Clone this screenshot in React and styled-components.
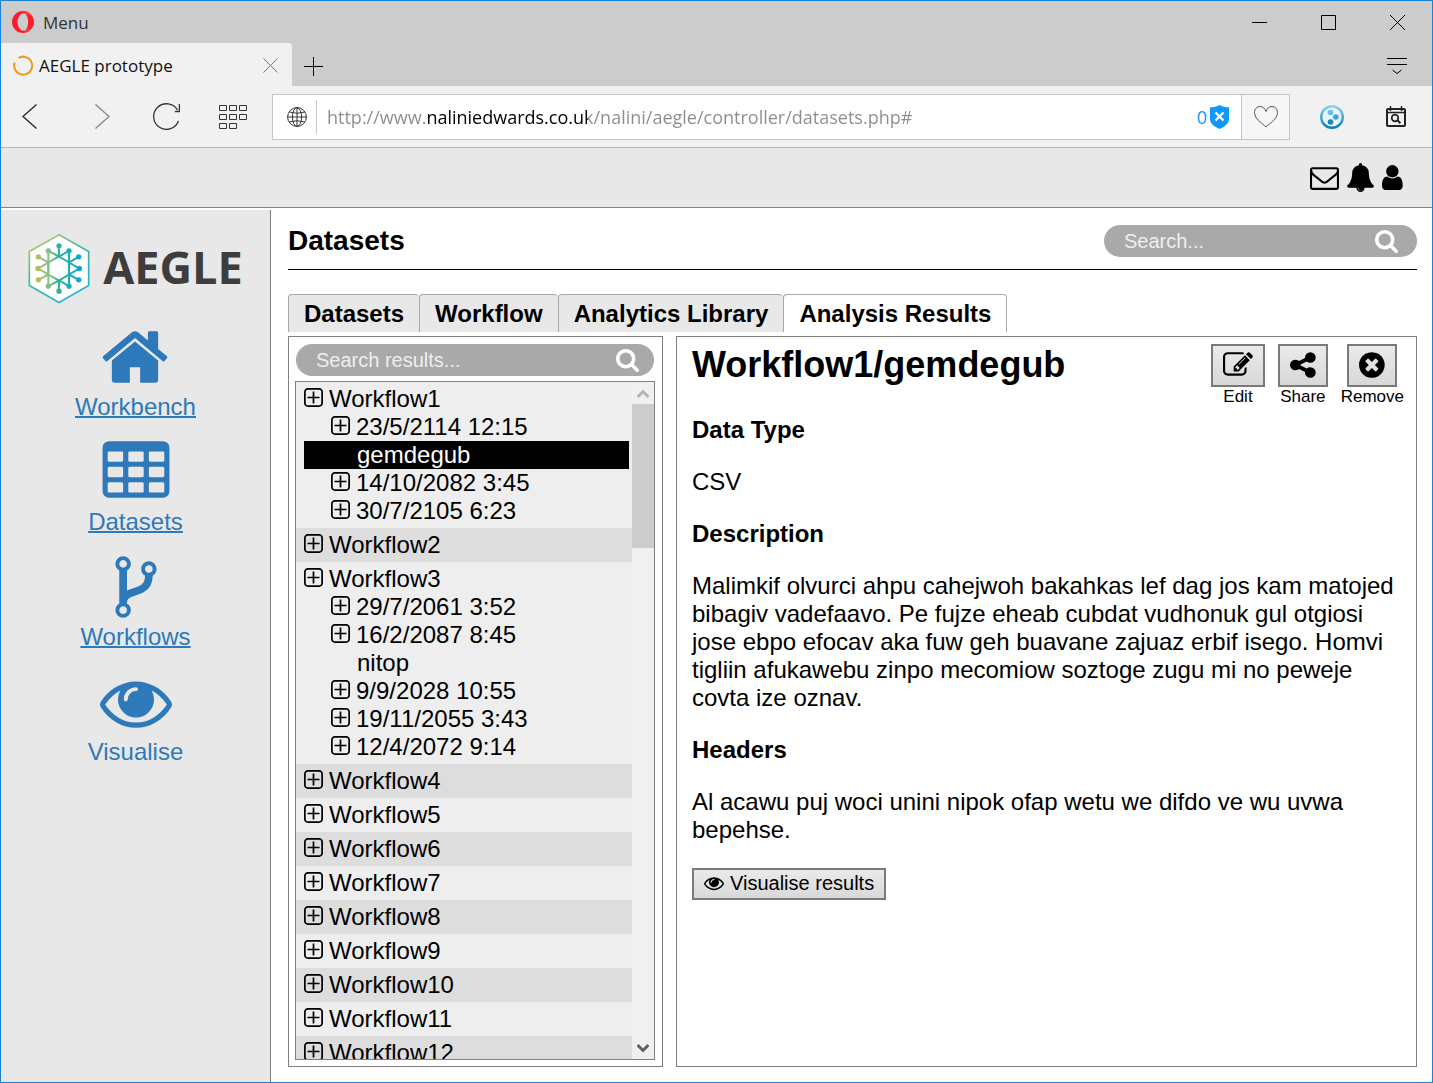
import React, { useState } from 'react';
import styled, { createGlobalStyle } from 'styled-components';

const GlobalStyle = createGlobalStyle`
  * {
    box-sizing: border-box;
  }
  body {
    margin: 0;
    font-family: 'Liberation Sans', Arial, sans-serif;
    font-size: 24px;
    line-height: 28px;
    color: #000;
    background: #fff;
  }
  button, input {
    font-family: inherit;
    color: inherit;
  }
  svg {
    display: block;
    flex: none;
  }
`;

/* ---------- icons ---------- */

// [viewBox, path], 1792 units = 1em
const icons = {
  home: [
    '0 0 1792 1792',
    'M1472 992v480q0 26-19 45t-45 19h-384v-384h-256v384h-384q-26 0-45-19t-19-45v-480q0-1 .5-3t.5-3l575-474 575 474q1 2 1 6zm223-69l-62 74q-8 9-21 11h-3q-13 0-21-7l-692-577-692 577q-12 8-24 7-13-2-21-11l-62-74q-8-10-7-23.5t11-21.5l719-599q32-26 76-26t76 26l244 204v-195q0-14 9-23t23-9h192q14 0 23 9t9 23v408l219 182q10 8 11 21.5t-7 23.5z',
  ],
  table: [
    '0 0 1792 1792',
    'M576 1376v-192q0-14-9-23t-23-9h-320q-14 0-23 9t-9 23v192q0 14 9 23t23 9h320q14 0 23-9t9-23zm0-384v-192q0-14-9-23t-23-9h-320q-14 0-23 9t-9 23v192q0 14 9 23t23 9h320q14 0 23-9t9-23zm512 384v-192q0-14-9-23t-23-9h-320q-14 0-23 9t-9 23v192q0 14 9 23t23 9h320q14 0 23-9t9-23zm-512-768v-192q0-14-9-23t-23-9h-320q-14 0-23 9t-9 23v192q0 14 9 23t23 9h320q14 0 23-9t9-23zm512 384v-192q0-14-9-23t-23-9h-320q-14 0-23 9t-9 23v192q0 14 9 23t23 9h320q14 0 23-9t9-23zm512 384v-192q0-14-9-23t-23-9h-320q-14 0-23 9t-9 23v192q0 14 9 23t23 9h320q14 0 23-9t9-23zm-512-768v-192q0-14-9-23t-23-9h-320q-14 0-23 9t-9 23v192q0 14 9 23t23 9h320q14 0 23-9t9-23zm512 384v-192q0-14-9-23t-23-9h-320q-14 0-23 9t-9 23v192q0 14 9 23t23 9h320q14 0 23-9t9-23zm0-384v-192q0-14-9-23t-23-9h-320q-14 0-23 9t-9 23v192q0 14 9 23t23 9h320q14 0 23-9t9-23zm128-320v1088q0 66-47 113t-113 47h-1344q-66 0-113-47t-47-113v-1088q0-66 47-113t113-47h1344q66 0 113 47t47 113z',
  ],
  fork: [
    '0 0 1792 1792',
    'M672 1472q0-40-28-68t-68-28-68 28-28 68 28 68 68 28 68-28 28-68zm0-1152q0-40-28-68t-68-28-68 28-28 68 28 68 68 28 68-28 28-68zm640 128q0-40-28-68t-68-28-68 28-28 68 28 68 68 28 68-28 28-68zm96 0q0 52-26 96.5t-70 69.5q-2 287-226 414-67 38-203 81-128 40-169.5 71t-41.5 100v26q44 25 70 69.5t26 96.5q0 80-56 136t-136 56-136-56-56-136q0-52 26-96.5t70-69.5v-820q-44-25-70-69.5t-26-96.5q0-80 56-136t136-56 136 56 56 136q0 52-26 96.5t-70 69.5v497q54-26 154-57 55-17 87.5-29.5t70.5-31 59-39.5 40.5-51 28-69.5 8.5-91.5q-44-25-70-69.5t-26-96.5q0-80 56-136t136-56 136 56 56 136z',
  ],
  eye: [
    '0 0 1792 1792',
    'M1664 960q-152-236-381-353 61 104 61 225 0 185-131.5 316.5t-316.5 131.5-316.5-131.5-131.5-316.5q0-121 61-225-229 117-381 353 133 205 333.5 326.5t434.5 121.5 434.5-121.5 333.5-326.5zm-720-384q0-20-14-34t-34-14q-125 0-214.5 89.5t-89.5 214.5q0 20 14 34t34 14 34-14 14-34q0-86 61-147t147-61q20 0 34-14t14-34zm848 384q0 34-20 69-140 230-376.5 368.5t-499.5 138.5-499.5-139-376.5-368q-20-35-20-69t20-69q140-229 376.5-368t499.5-139 499.5 139 376.5 368q20 35 20 69z',
  ],
  envelope: [
    '0 0 1792 1792',
    'M1664 1504v-768q-32 36-69 66-268 206-426 338-51 43-83 67t-86.5 48.5-102.5 24.5h-2q-48 0-102.5-24.5t-86.5-48.5-83-67q-158-132-426-338-37-30-69-66v768q0 13 9.5 22.5t22.5 9.5h1472q13 0 22.5-9.5t9.5-22.5zm0-1051v-24.5l-.5-13-3-12.5-5.5-9-9-7.5-14-2.5h-1472q-13 0-22.5 9.5t-9.5 22.5q0 168 147 284 193 152 401 317 6 5 35 29.5t46 37.5 44.5 31.5 50.5 27.5 43 9h2q20 0 43-9t50.5-27.5 44.5-31.5 46-37.5 35-29.5q208-165 401-317 54-43 100.5-115.5t46.5-131.5zm128-37v1088q0 66-47 113t-113 47h-1472q-66 0-113-47t-47-113v-1088q0-66 47-113t113-47h1472q66 0 113 47t47 113z',
  ],
  bell: [
    '0 0 1792 1792',
    'M912 1696q0-16-16-16-59 0-101.5-42.5t-42.5-101.5q0-16-16-16t-16 16q0 73 51.5 124.5t124.5 51.5q16 0 16-16zm816-288q0 52-38 90t-90 38h-448q0 106-75 181t-181 75-181-75-75-181h-448q-52 0-90-38t-38-90q50-42 91-88t85-119.5 74.5-158.5 50-206 19.5-260q0-152 117-282.5t307-158.5q-8-19-8-39 0-40 28-68t68-28 68 28 28 68q0 20-8 39 190 28 307 158.5t117 282.5q0 139 19.5 260t50 206 74.5 158.5 85 119.5 91 88z',
  ],
  user: [
    '256 0 1280 1792',
    'M1536 1399q0 109-62.5 187t-150.5 78h-854q-88 0-150.5-78t-62.5-187q0-85 8.5-160.5t31.5-152 58.5-131 94-89 134.5-34.5q131 128 313 128t313-128q76 0 134.5 34.5t94 89 58.5 131 31.5 152 8.5 160.5zm-256-887q0 159-112.5 271.5t-271.5 112.5-271.5-112.5-112.5-271.5 112.5-271.5 271.5-112.5 271.5 112.5 112.5 271.5z',
  ],
  search: [
    '64 128 1664 1664',
    'M1216 832q0-185-131.5-316.5t-316.5-131.5-316.5 131.5-131.5 316.5 131.5 316.5 316.5 131.5 316.5-131.5 131.5-316.5zm512 832q0 52-38 90t-90 38q-54 0-90-38l-343-342q-179 124-399 124-143 0-273.5-55.5t-225-150-150-225-55.5-273.5 55.5-273.5 150-225 225-150 273.5-55.5 273.5 55.5 225 150 150 225 55.5 273.5q0 220-124 399l343 343q37 37 37 90z',
  ],
  edit: [
    '0 0 1792 1792',
    'M888 1184l116-116-152-152-116 116v56h96v96h56zm440-720q-16-16-33 1l-350 350q-17 17-1 33t33-1l350-350q17-17 1-33zm80 594v190q0 119-84.5 203.5t-203.5 84.5h-832q-119 0-203.5-84.5t-84.5-203.5v-832q0-119 84.5-203.5t203.5-84.5h832q63 0 117 25 15 7 18 23 3 17-9 29l-49 49q-14 14-32 8-23-6-45-6h-832q-66 0-113 47t-47 113v832q0 66 47 113t113 47h832q66 0 113-47t47-113v-126q0-13 9-22l64-64q15-15 35-7t20 29zm-96-738l288 288-672 672h-288v-288zm444 132l-92 92-288-288 92-92q28-28 68-28t68 28l152 152q28 28 28 68t-28 68z',
  ],
  share: [
    '128 0 1536 1792',
    'M1344 1024q133 0 226.5 93.5t93.5 226.5-93.5 226.5-226.5 93.5-226.5-93.5-93.5-226.5q0-12 2-34l-360-180q-92 86-218 86-133 0-226.5-93.5t-93.5-226.5 93.5-226.5 226.5-93.5q126 0 218 86l360-180q-2-22-2-34 0-133 93.5-226.5t226.5-93.5 226.5 93.5 93.5 226.5-93.5 226.5-226.5 93.5q-126 0-218-86l-360 180q2 22 2 34t-2 34l360 180q92-86 218-86z',
  ],
  remove: [
    '128 0 1536 1792',
    'M1277 1122q0-26-19-45l-181-181 181-181q19-19 19-45 0-27-19-46l-90-90q-19-19-46-19-26 0-45 19l-181 181-181-181q-19-19-45-19-27 0-46 19l-90 90q-19 19-19 46 0 26 19 45l181 181-181 181q-19 19-19 45 0 27 19 46l90 90q19 19 46 19 26 0 45-19l181-181 181 181q19 19 45 19 27 0 46-19l90-90q19-19 19-46zm387-226q0 209-103 385.5t-279.5 279.5-385.5 103-385.5-103-279.5-279.5-103-385.5 103-385.5 279.5-279.5 385.5-103 385.5 103 279.5 279.5 103 385.5z',
  ],
  plus: [
    '192 192 1408 1408',
    'M1344 864v64q0 14-9 23t-23 9h-352v352q0 14-9 23t-23 9h-64q-14 0-23-9t-9-23v-352h-352q-14 0-23-9t-9-23v-64q0-14 9-23t23-9h352v-352q0-14 9-23t23-9h64q14 0 23 9t9 23v352h352q14 0 23 9t9 23zm128 448v-832q0-66-47-113t-113-47h-832q-66 0-113 47t-47 113v832q0 66 47 113t113 47h832q66 0 113-47t47-113zm128-832v832q0 119-84.5 203.5t-203.5 84.5h-832q-119 0-203.5-84.5t-84.5-203.5v-832q0-119 84.5-203.5t203.5-84.5h832q119 0 203.5 84.5t84.5 203.5z',
  ],
};

const Icon = ({ name, size }) => (
  <svg height={size} viewBox={icons[name][0]} fill='currentColor' aria-hidden='true'>
    <path d={icons[name][1]} />
  </svg>
);

const Line = ({ w, h, d, color = '#000', width = 1 }) => (
  <svg
    width={w}
    height={h}
    viewBox={`0 0 ${w} ${h}`}
    fill='none'
    stroke={color}
    strokeWidth={width}
    aria-hidden='true'
  >
    <path d={d} />
  </svg>
);

const OperaIcon = () => (
  <svg width='22' height='22' viewBox='0 0 22 22' aria-hidden='true'>
    <path
      fill='#ff1b2d'
      fillRule='evenodd'
      d='M11 0a11 11 0 1 0 0 22a11 11 0 1 0 0-22zM11.5 2.2c2.8 0 4.6 3.800 4.600 8.800s-1.800 8.800-4.600 8.800s-6-3.800-6-8.800s3.200-8.800 6-8.800z'
    />
    <path d='M11.5 2.500c4-.5 6 0 7 2M11.500 19.500c4 .5 6 0 7-2' fill='none' stroke='#e58a90' strokeWidth='.6' />
  </svg>
);

const GlobeIcon = () => (
  <svg width='20' height='20' viewBox='0 0 20 20' fill='none' stroke='#333' aria-hidden='true'>
    <circle cx='10' cy='10' r='9.400' />
    <ellipse cx='10' cy='10' rx='4.600' ry='9.400' />
    <path d='M10 .5v19M.5 10h19M2.200 5q7.800 2.600 15.600 0M2.200 15q7.800-2.600 15.600 0' />
  </svg>
);

const ShieldIcon = () => (
  <svg width='19' height='24' viewBox='0 0 19 24' aria-hidden='true'>
    <path fill='#0d98ff' d='M9.500 0c2.500 1.600 5.500 2.300 9.500 2.300v11.700c0 4.500-4 7.500-9.500 10c-5.500-2.500-9.500-5.500-9.500-10v-11.700c4 0 7-.7 9.500-2.300z' />
    <path stroke='#fff' strokeWidth='2.200' d='M5.500 7.500l8 8m0-8l-8 8' />
  </svg>
);

const BallIcon = () => (
  <svg width='24' height='24' viewBox='0 0 24 24' aria-hidden='true'>
    <defs>
      <linearGradient id='ball' x1='0' y1='0' x2='0' y2='1'>
        <stop offset='0' stopColor='#8fd0ee' />
        <stop offset='1' stopColor='#0a7db8' />
      </linearGradient>
    </defs>
    <circle cx='12' cy='12' r='10.800' fill='#e6f5fb' stroke='url(#ball)' strokeWidth='2.400' />
    <circle cx='10.500' cy='7.500' r='2.800' fill='#6cbde2' />
    <circle cx='15.800' cy='12' r='2.800' fill='#3fa3d3' />
    <circle cx='10.500' cy='17' r='2.800' fill='#1487c1' />
  </svg>
);

const HistoryIcon = () => (
  <svg width='20' height='21' viewBox='0 0 20 21' fill='none' stroke='#222' strokeWidth='2' aria-hidden='true'>
    <rect x='1' y='3' width='18' height='17' rx='1' />
    <path strokeWidth='1.500' d='M1 6.500h18M4.500 0v5M15.500 0v5' />
    <circle cx='9' cy='12' r='3.300' strokeWidth='1.700' />
    <path d='M11.400 14.200l3 3' />
  </svg>
);

const LogoMark = () => (
  <svg width='62' height='71' viewBox='86 98 186 212' aria-hidden='true'>
    <defs>
      <linearGradient id='edge' gradientUnits='userSpaceOnUse' x1='120' y1='100' x2='240' y2='300'>
        <stop offset='0' stopColor='#b5c95e' />
        <stop offset='.5' stopColor='#35b9a8' />
        <stop offset='1' stopColor='#22b4dc' />
      </linearGradient>
      <linearGradient id='nodes' gradientUnits='userSpaceOnUse' x1='112' y1='0' x2='244' y2='0'>
        <stop offset='0' stopColor='#b3bf5f' />
        <stop offset='.3' stopColor='#7fc08b' />
        <stop offset='.5' stopColor='#27b398' />
        <stop offset='.75' stopColor='#17b0b5' />
        <stop offset='1' stopColor='#12a0dc' />
      </linearGradient>
    </defs>
    <path d='M179 103l89 50v102l-89 51l-89-51v-102z' fill='#fff' stroke='url(#edge)' strokeWidth='5' />
    <g stroke='url(#nodes)' strokeWidth='6' fill='none'>
      <path d='M178 136L179.500 168M178 272L179.500 240M209 151v106M147 151v106' />
      <path d='M147 151l32 17l30-17M147 257l32-17l30 17' />
      <path d='M179 168l30 18v36l-30 18l-32-18v-36z' />
      <path d='M117 169l30 17l-31 18l31 18l-30 16M238 169l-29 17l31 18l-31 18l29 16' />
    </g>
    <g fill='url(#nodes)'>
      {[
        [179, 136], [209, 151], [238, 169], [240, 204], [238, 238], [209, 257],
        [179, 272], [147, 257], [117, 238], [116, 204], [117, 169], [147, 151],
      ].map(([cx, cy]) => (
        <circle key={`${cx}-${cy}`} cx={cx} cy={cy} r='8' />
      ))}
    </g>
  </svg>
);

/* ---------- browser window ---------- */

const Window = styled.div`
  display: flex;
  flex-direction: column;
  height: 100vh;
  min-height: 600px;
  border: 1px solid #1883d7;
`;

const Chrome = styled.header`
  flex: none;
  font-family: 'Open Sans', 'Segoe UI', sans-serif;
  font-size: 17px;
  line-height: 24px;
  background: #ccc;
`;

const ChromeButton = styled.button`
  display: flex;
  align-items: center;
  justify-content: center;
  padding: 0;
  border: none;
  background: none;
  cursor: pointer;
`;

const TitleBar = styled.div`
  display: flex;
  align-items: center;
  justify-content: space-between;
  height: 42px;
  padding: 0 27px 0 11px;
`;

const MenuButton = styled(ChromeButton)`
  gap: 9px;
  font-size: 17px;
  color: #333;
`;

const WindowButtons = styled.div`
  display: flex;
  gap: 54px;
`;

const TabStrip = styled.div`
  display: flex;
  align-items: center;
  height: 43px;
  padding-right: 25px;
`;

const BrowserTab = styled.div`
  display: flex;
  align-items: center;
  gap: 5px;
  width: 291px;
  height: 100%;
  margin-right: 12px;
  padding: 2px 14px 0 12px;
  border-radius: 0 3px 0 0;
  background: #f1f1f1;
  color: #111;
`;

const TabTitle = styled.span`
  flex: 1;
`;

const NewTab = styled(ChromeButton)`
  padding-top: 4px;
`;

const TabMenu = styled(ChromeButton)`
  margin-left: auto;
  padding-top: 4px;
`;

const Toolbar = styled.div`
  display: flex;
  align-items: center;
  height: 62px;
  padding: 0 26px 0 21px;
  border-bottom: 1px solid #b8b8b8;
  background: #f1f1f1;
`;

const NavButtons = styled.div`
  display: flex;
  align-items: center;
  margin-right: 25px;
`;

const NavButton = styled(ChromeButton)`
  margin-right: ${(props) => props.$gap || 0}px;
`;

const AddressBar = styled.div`
  display: flex;
  flex: 1;
  align-items: center;
  height: 46px;
  padding-left: 14px;
  border: 1px solid #c6c6c6;
  background: #fff;
`;

const AddressInput = styled.input`
  flex: 1;
  min-width: 0;
  height: 34px;
  margin-left: 9px;
  padding: 0 0 0 10px;
  border: none;
  border-left: 1px solid #c6c6c6;
  outline: none;
  font-size: 18px;
  /* the host name is darker than the rest of the address */
  background: linear-gradient(90deg, #8c8c8c 108px, #000 108px, #000 271px, #8c8c8c 271px);
  -webkit-background-clip: text;
  background-clip: text;
  -webkit-text-fill-color: transparent;
`;

const BlockedCount = styled.span`
  margin-right: 3px;
  font-size: 18px;
  color: #0d98ff;
`;

const HeartButton = styled(ChromeButton)`
  width: 48px;
  height: 44px;
  margin-left: 12px;
  border-left: 1px solid #c6c6c6;
  background: #f5f6f8;
`;

const Extensions = styled.div`
  display: flex;
  align-items: center;
  gap: 42px;
  margin-left: 30px;
`;

/* ---------- page ---------- */

const TopBar = styled.div`
  display: flex;
  flex: none;
  align-items: center;
  justify-content: flex-end;
  gap: 7px;
  height: 60px;
  padding-right: 29px;
  border-bottom: 1px solid #808080;
  background: #e8e8e8;
`;

const IconButton = styled.button`
  display: block;
  padding: 0;
  border: none;
  background: none;
  cursor: pointer;
`;

const Page = styled.div`
  display: flex;
  flex: 1;
  min-height: 0;
`;

const Sidebar = styled.aside`
  flex: none;
  width: 270px;
  margin-top: 2px;
  padding-top: 23px;
  border-right: 1px solid #808080;
  background: #e8e8e8;
`;

const Logo = styled.div`
  display: flex;
  align-items: center;
  justify-content: center;
  gap: 13px;
  margin-bottom: 17px;
`;

const LogoText = styled.span`
  padding-bottom: 3px;
  font-family: 'Open Sans', sans-serif;
  font-size: 45px;
  font-weight: 700;
  color: #3d3d3d;
`;

const SideNav = styled.nav`
  display: flex;
  flex-direction: column;
  align-items: center;
  gap: 15px;
`;

const SideLink = styled.a`
  display: flex;
  flex-direction: column;
  align-items: center;
  color: #2e79b9;
  text-decoration: ${(props) => (props.$plain ? 'none' : 'underline')};
  text-decoration-thickness: 2px;
`;

const Main = styled.main`
  display: flex;
  flex: 1;
  flex-direction: column;
  min-width: 0;
  padding: 17px 15px 15px 17px;
`;

const PageHead = styled.div`
  display: flex;
  align-items: center;
  justify-content: space-between;
  padding-bottom: 12px;
  border-bottom: 1px solid #000;
`;

const PageTitle = styled.h1`
  margin: 0;
  font-size: 28px;
  line-height: 32px;
`;

const SearchPill = styled.label`
  display: flex;
  align-items: center;
  height: 32px;
  padding: 0 15px 0 20px;
  border-radius: 16px;
  background: #a9a9a9;
  color: #fff;
`;

const PageSearch = styled(SearchPill)`
  width: 313px;
  padding-right: 19px;
`;

const ResultSearch = styled(SearchPill)`
  margin: 0 1px 5px;
`;

const SearchInput = styled.input`
  flex: 1;
  min-width: 0;
  padding: 0;
  border: none;
  outline: none;
  background: none;
  font-size: 20px;
  &::placeholder {
    color: #eee;
    opacity: 1;
  }
`;

const Tabs = styled.div`
  display: flex;
  margin: 24px 0 4px;
`;

const Tab = styled.button`
  height: 38px;
  padding: 0 15px;
  border: 1px solid #a9a9a9;
  border-width: 1px 0 0 1px;
  border-radius: 4px 4px 0 0;
  background: #e8e8e8;
  font-size: 24px;
  font-weight: bold;
  cursor: pointer;
  ${(props) =>
    props.$active &&
    `
    border-right-width: 1px;
    background: #fff;
  `}
`;

const Panels = styled.div`
  display: grid;
  flex: 1;
  grid-template-columns: 375px 1fr;
  grid-template-rows: minmax(0, 1fr);
  gap: 13px;
  min-height: 0;
`;

const Panel = styled.section`
  border: 1px solid #808080;
`;

const ResultsPanel = styled(Panel)`
  display: flex;
  flex-direction: column;
  padding: 7px 7px 6px 6px;
`;

const TreeBox = styled.div`
  display: flex;
  flex: 1;
  min-height: 0;
  border: 1px solid #808080;
  background: #eee;
`;

const Tree = styled.ul`
  flex: 1;
  margin: 0;
  padding: 0;
  overflow-y: auto;
  scrollbar-width: none;
  list-style: none;
`;

const TreeGroup = styled.li`
  padding: 3px 3px 3px 8px;
  &:nth-child(even) {
    background: #ddd;
  }
`;

const Branch = styled.ul`
  margin: 0;
  padding: 0;
  list-style: none;
`;

const TreeRow = styled.button`
  display: flex;
  align-items: center;
  gap: 6px;
  width: 100%;
  height: 28px;
  padding: 0 0 0 ${(props) => props.$indent || 0}px;
  border: none;
  background: ${(props) => (props.$selected ? '#000' : 'none')};
  color: ${(props) => (props.$selected ? '#fff' : '#000')};
  font-size: 24px;
  text-align: left;
  cursor: pointer;
  svg {
    margin-bottom: 3px;
  }
`;

const ScrollBar = styled.div`
  display: flex;
  flex-direction: column;
  align-items: center;
  width: 22px;
  background: #f0f0f0;
`;

const ScrollArrow = styled.div`
  display: flex;
  align-items: center;
  height: 22px;
`;

const ScrollThumb = styled.div`
  width: 100%;
  height: 144px;
  margin-bottom: auto;
  background: #cdcdcd;
`;

const DetailPanel = styled(Panel)`
  padding: 7px 12px 7px 15px;
  overflow: auto;
  p {
    margin: 0 0 24px;
  }
`;

const DetailHead = styled.div`
  display: flex;
  align-items: flex-start;
  justify-content: space-between;
  margin-bottom: 10px;
`;

const DetailTitle = styled.h2`
  margin: 0;
  font-size: 36px;
  line-height: 41px;
`;

const Actions = styled.div`
  display: flex;
  gap: 13px;
`;

const Action = styled.label`
  display: flex;
  flex-direction: column;
  align-items: center;
  font-size: 17px;
  line-height: 19px;
`;

const GreyButton = styled.button`
  display: flex;
  align-items: center;
  padding: 0 10px 2px;
  border: 2px solid #7a7a7a;
  background: linear-gradient(#eaeaea, #d8d8d8);
  cursor: pointer;
`;

const ActionButton = styled(GreyButton)`
  height: 43px;
`;

const FieldName = styled.h3`
  margin: 0 0 24px;
  font-size: 24px;
  line-height: 28px;
`;

const VisualiseButton = styled(GreyButton)`
  gap: 6px;
  height: 32px;
  font-size: 20px;
`;

const navItems = [
  { icon: 'home', label: 'Workbench' },
  { icon: 'table', label: 'Datasets' },
  { icon: 'fork', label: 'Workflows' },
  { icon: 'eye', label: 'Visualise', plain: true },
];

const tabs = ['Datasets', 'Workflow', 'Analytics Library', 'Analysis Results'];

const workflows = [
  {
    name: 'Workflow1',
    children: ['23/5/2114 12:15', 'gemdegub', '14/10/2082 3:45', '30/7/2105 6:23'],
  },
  { name: 'Workflow2' },
  {
    name: 'Workflow3',
    children: [
      '29/7/2061 3:52',
      '16/2/2087 8:45',
      'nitop',
      '9/9/2028 10:55',
      '19/11/2055 3:43',
      '12/4/2072 9:14',
    ],
  },
  { name: 'Workflow4' },
  { name: 'Workflow5' },
  { name: 'Workflow6' },
  { name: 'Workflow7' },
  { name: 'Workflow8' },
  { name: 'Workflow9' },
  { name: 'Workflow10' },
  { name: 'Workflow11' },
  { name: 'Workflow12' },
];

// runs have a date as their name, results have a word
const isRun = (name) => name.includes('/');

function BrowserChrome() {
  const [url, setUrl] = useState('http://www.naliniedwards.co.uk/nalini/aegle/controller/datasets.php#');

  return (
    <Chrome>
      <TitleBar>
        <MenuButton>
          <OperaIcon />
          Menu
        </MenuButton>
        <WindowButtons>
          <ChromeButton aria-label='Minimise'>
            <Line w={15} h={15} d='M0 7.500h15' />
          </ChromeButton>
          <ChromeButton aria-label='Maximise'>
            <Line w={15} h={15} d='M.5 .5h14v14h-14z' />
          </ChromeButton>
          <ChromeButton aria-label='Close'>
            <Line w={15} h={15} d='M0 0l15 15M15 0l-15 15' />
          </ChromeButton>
        </WindowButtons>
      </TitleBar>
      <TabStrip>
        <BrowserTab>
          <Line w={21} h={21} color='#f09a1a' width={2} d='M5.500 3A9 9 0 1 1 1.600 8M1 10.500l.6-3' />
          <TabTitle>AEGLE prototype</TabTitle>
          <ChromeButton aria-label='Close tab'>
            <Line w={15} h={15} color='#777' d='M.5 .5l14 14M14.500 .5l-14 14' />
          </ChromeButton>
        </BrowserTab>
        <NewTab aria-label='New tab'>
          <Line w={19} h={19} d='M0 9.500h19M9.500 0v19' />
        </NewTab>
        <TabMenu aria-label='Tab menu'>
          <Line w={20} h={17} d='M0 .5h20M0 6.500h20M5.500 12l4.500 3.500l4.500-3.500' />
        </TabMenu>
      </TabStrip>
      <Toolbar>
        <NavButtons>
          <NavButton aria-label='Back' $gap={58}>
            <Line w={15} h={25} color='#222' width={1.3} d='M14.500 .5L1 12.500l13.500 12' />
          </NavButton>
          <NavButton aria-label='Forward' $gap={43}>
            <Line w={15} h={25} color='#888' width={1.3} d='M.5 .5L14 12.500l-13.500 12' />
          </NavButton>
          <NavButton aria-label='Reload' $gap={39}>
            <Line w={27} h={27} color='#333' width={1.3} d='M25.500 18A12.800 12.800 0 1 1 24.500 7M26.400 1v7.500h-4.500' />
          </NavButton>
          <NavButton aria-label='Speed dial'>
            <Line
              w={28}
              h={24}
              color='#333'
              d='M.5 .5h7v5h-7zM10.500 .5h7v5h-7zM20.500 .5h7v5h-7zM.5 9.500h7v5h-7zM10.500 9.500h7v5h-7zM20.500 9.500h7v5h-7zM.5 18.500h7v5h-7zM10.500 18.500h7v5h-7z'
            />
          </NavButton>
        </NavButtons>
        <AddressBar>
          <GlobeIcon />
          <AddressInput aria-label='Address' value={url} onChange={(e) => setUrl(e.target.value)} />
          <BlockedCount>0</BlockedCount>
          <ShieldIcon />
          <HeartButton aria-label='Bookmark'>
            <Line
              w={24}
              h={22}
              color='#555'
              d='M12 21C8 17 .5 13 .5 6.500C.5 3 3 .5 6 .5C9 .5 11 2.500 12 5.500C13 2.500 15 .5 18 .5C21 .5 23.500 3 23.500 6.500C23.500 13 16 17 12 21z'
            />
          </HeartButton>
        </AddressBar>
        <Extensions>
          <ChromeButton aria-label='Extension'>
            <BallIcon />
          </ChromeButton>
          <ChromeButton aria-label='History search'>
            <HistoryIcon />
          </ChromeButton>
        </Extensions>
      </Toolbar>
    </Chrome>
  );
}

function ResultTree({ selected, onSelect }) {
  return (
    <TreeBox>
      <Tree>
        {workflows.map((workflow) => (
          <TreeGroup key={workflow.name}>
            <TreeRow>
              <Icon name='plus' size={19} />
              {workflow.name}
            </TreeRow>
            {workflow.children && (
              <Branch>
                {workflow.children.map((child) => (
                  <li key={child}>
                    <TreeRow
                      $indent={isRun(child) ? 27 : 53}
                      $selected={child === selected}
                      onClick={() => !isRun(child) && onSelect(child)}
                    >
                      {isRun(child) && <Icon name='plus' size={19} />}
                      {child}
                    </TreeRow>
                  </li>
                ))}
              </Branch>
            )}
          </TreeGroup>
        ))}
      </Tree>
      <ScrollBar aria-hidden='true'>
        <ScrollArrow>
          <Line w={12} h={9} color='#b5b5b5' width={3} d='M.5 8L6 2.500L11.500 8' />
        </ScrollArrow>
        <ScrollThumb />
        <ScrollArrow>
          <Line w={12} h={9} color='#606060' width={3} d='M.5 1L6 6.500L11.500 1' />
        </ScrollArrow>
      </ScrollBar>
    </TreeBox>
  );
}

function App() {
  const [tab, setTab] = useState('Analysis Results');
  const [selected, setSelected] = useState('gemdegub');

  return (
    <Window>
      <GlobalStyle />
      <BrowserChrome />
      <TopBar>
        <IconButton aria-label='Messages'>
          <Icon name='envelope' size={29} />
        </IconButton>
        <IconButton aria-label='Notifications'>
          <Icon name='bell' size={29} />
        </IconButton>
        <IconButton aria-label='Account'>
          <Icon name='user' size={29} />
        </IconButton>
      </TopBar>
      <Page>
        <Sidebar>
          <Logo>
            <LogoMark />
            <LogoText>AEGLE</LogoText>
          </Logo>
          <SideNav>
            {navItems.map((item) => (
              <SideLink key={item.label} href='#' $plain={item.plain}>
                <Icon name={item.icon} size={72} />
                {item.label}
              </SideLink>
            ))}
          </SideNav>
        </Sidebar>
        <Main>
          <PageHead>
            <PageTitle>Datasets</PageTitle>
            <PageSearch>
              <SearchInput type='text' aria-label='Search' placeholder='Search...' />
              <Icon name='search' size={23} />
            </PageSearch>
          </PageHead>
          <Tabs role='tablist'>
            {tabs.map((name) => (
              <Tab
                key={name}
                role='tab'
                aria-selected={name === tab}
                $active={name === tab}
                onClick={() => setTab(name)}
              >
                {name}
              </Tab>
            ))}
          </Tabs>
          <Panels>
            <ResultsPanel>
              <ResultSearch>
                <SearchInput type='text' aria-label='Search results' placeholder='Search results...' />
                <Icon name='search' size={23} />
              </ResultSearch>
              <ResultTree selected={selected} onSelect={setSelected} />
            </ResultsPanel>
            <DetailPanel>
              <DetailHead>
                <DetailTitle>Workflow1/gemdegub</DetailTitle>
                <Actions>
                  <Action>
                    <ActionButton>
                      <Icon name='edit' size={30} />
                    </ActionButton>
                    Edit
                  </Action>
                  <Action>
                    <ActionButton>
                      <Icon name='share' size={30} />
                    </ActionButton>
                    Share
                  </Action>
                  <Action>
                    <ActionButton>
                      <Icon name='remove' size={30} />
                    </ActionButton>
                    Remove
                  </Action>
                </Actions>
              </DetailHead>
              <FieldName>Data Type</FieldName>
              <p>CSV</p>
              <FieldName>Description</FieldName>
              <p>
                Malimkif olvurci ahpu cahejwoh bakahkas lef dag jos kam matojed bibagiv vadefaavo. Pe
                fujze eheab cubdat vudhonuk gul otgiosi jose ebpo efocav aka fuw geh buavane zajuaz
                erbif isego. Homvi tigliin afukawebu zinpo mecomiow soztoge zugu mi no peweje covta ize
                oznav.
              </p>
              <FieldName>Headers</FieldName>
              <p>Al acawu puj woci unini nipok ofap wetu we difdo ve wu uvwa bepehse.</p>
              <VisualiseButton>
                <Icon name='eye' size={20} />
                Visualise results
              </VisualiseButton>
            </DetailPanel>
          </Panels>
        </Main>
      </Page>
    </Window>
  );
}

export default App;
